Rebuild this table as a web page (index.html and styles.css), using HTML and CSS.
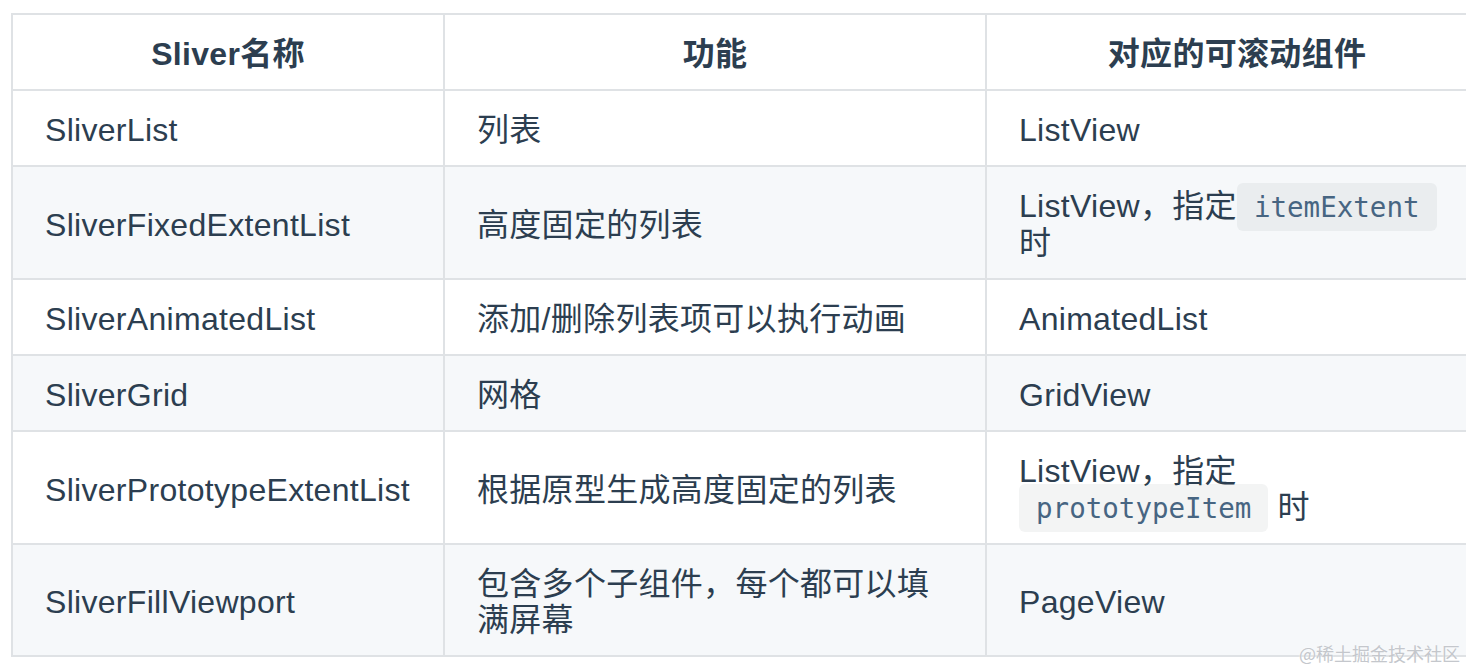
FILE: index.html
```html
<!DOCTYPE html>
<html lang="zh">
<head>
    <meta charset="UTF-8">
    <meta name="viewport" content="width=device-width, initial-scale=1.0">
    <title>Sliver</title>
    <link rel="stylesheet" href="styles.css">
</head>
<body>
    <div class="page">
        <table class="sliver-table">
            <colgroup>
                <col class="col-name">
                <col class="col-func">
                <col class="col-widget">
            </colgroup>
            <thead>
                <tr>
                    <th>Sliver名称</th>
                    <th>功能</th>
                    <th>对应的可滚动组件</th>
                </tr>
            </thead>
            <tbody>
                <tr>
                    <td>SliverList</td>
                    <td>列表</td>
                    <td>ListView</td>
                </tr>
                <tr>
                    <td>SliverFixedExtentList</td>
                    <td>高度固定的列表</td>
                    <td>ListView，指定<code>itemExtent</code> 时</td>
                </tr>
                <tr>
                    <td>SliverAnimatedList</td>
                    <td>添加/删除列表项可以执行动画</td>
                    <td>AnimatedList</td>
                </tr>
                <tr>
                    <td>SliverGrid</td>
                    <td>网格</td>
                    <td>GridView</td>
                </tr>
                <tr>
                    <td>SliverPrototypeExtentList</td>
                    <td>根据原型生成高度固定的列表</td>
                    <td>ListView，指定 <code>prototypeItem</code> 时</td>
                </tr>
                <tr>
                    <td>SliverFillViewport</td>
                    <td>包含多个子组件，每个都可以填满屏幕</td>
                    <td>PageView</td>
                </tr>
            </tbody>
        </table>
        <div class="watermark">@稀土掘金技术社区</div>
    </div>
</body>
</html>
```

FILE: styles.css
```css
html, body {
    margin: 0;
    padding: 0;
    background-color: #fff;
    overflow: hidden;
}
body {
    font-family: "Liberation Sans", "Noto Sans CJK SC", sans-serif;
    color: #2c3e50;
}
.page {
    position: relative;
    width: 1466px;
    height: 670px;
    padding: 13px 0 0 11px;
    box-sizing: border-box;
}
.sliver-table {
    border-collapse: collapse;
    table-layout: fixed;
    width: 1476px;
    font-size: 32px;
    line-height: 36px;
    letter-spacing: 0.3px;
}
.col-name {
    width: 432px;
}
.col-func {
    width: 542px;
}
.col-widget {
    width: 502px;
}
th, td {
    border: 2px solid #dfe2e5;
    padding: 21px 32px 17px;
    text-align: left;
    vertical-align: middle;
}
th {
    text-align: center;
    font-weight: bold;
}
tbody tr:nth-child(2n) {
    background-color: #f6f8fa;
}
code {
    font-family: "DejaVu Sans Mono", "Liberation Mono", monospace;
    font-size: 0.86em;
    letter-spacing: 0;
    color: #476582;
    background-color: rgba(27, 31, 35, 0.05);
    padding: 8px 17px;
    border-radius: 6px;
}
.watermark {
    position: absolute;
    right: 6px;
    bottom: 7px;
    font-family: "Noto Sans CJK SC", sans-serif;
    font-size: 18px;
    line-height: 20px;
    color: #c4c7cc;
    text-shadow: 0 0 2px #fff;
}
```
